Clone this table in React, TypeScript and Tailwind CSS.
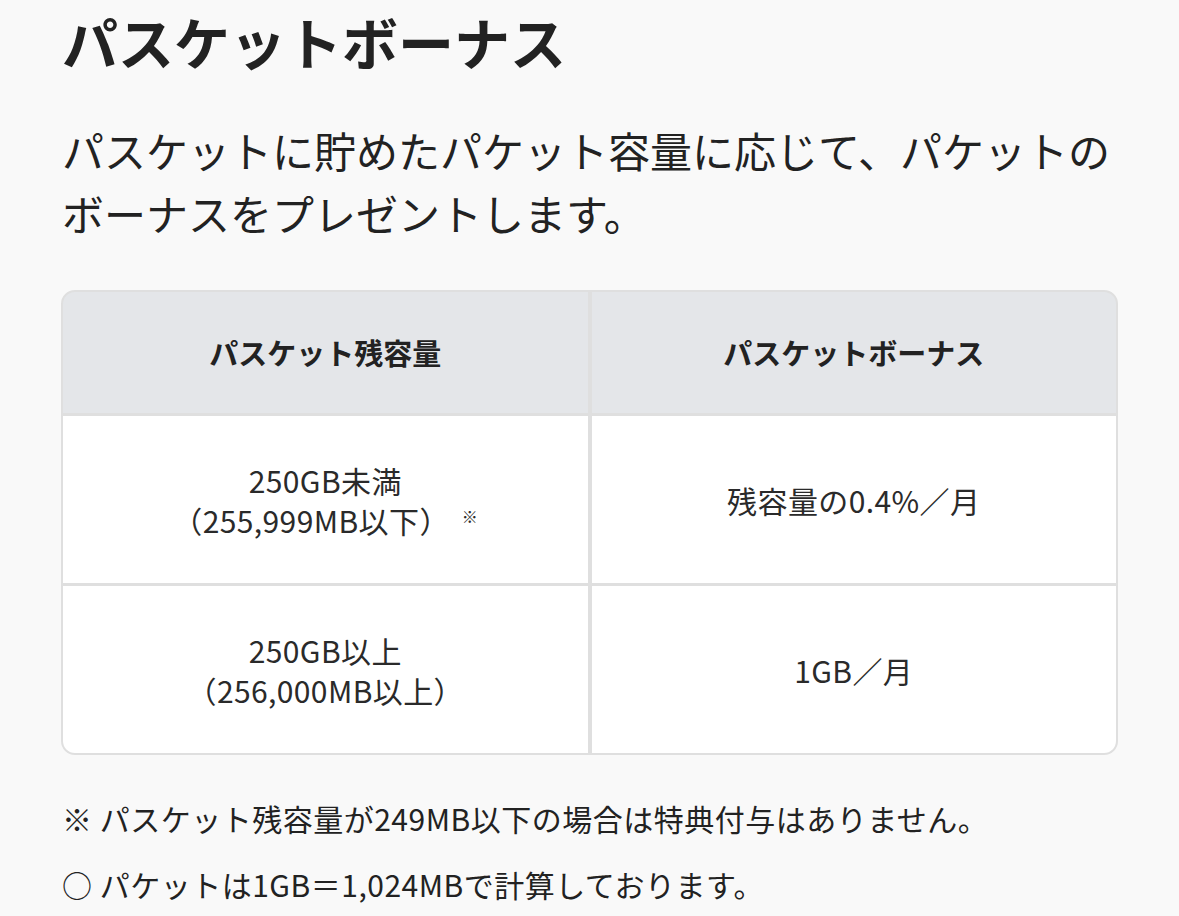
const font = '[font-family:"Noto_Sans_CJK_JP","Noto_Sans",sans-serif]'

interface Row {
  range: string[]
  note?: boolean
  bonus: string
}

const rows: Row[] = [
  { range: ['250GB未満', '（255,999MB以下）'], note: true, bonus: '残容量の0.4%／月' },
  { range: ['250GB以上', '（256,000MB以上）'], bonus: '1GB／月' },
]

function HeadCell({ children }: { children: React.ReactNode }) {
  return (
    <div className="h-[121px] flex items-center justify-center bg-[#e4e6e9] text-[29px] font-bold text-[#222]">
      {children}
    </div>
  )
}

function BodyCell({ children }: { children: React.ReactNode }) {
  return (
    <div className="h-[167px] flex flex-col items-center justify-center bg-white text-[30px] leading-[40px] tracking-[0.4px] text-[#2a2a2a]">
      {children}
    </div>
  )
}

export default function App() {
  return (
    <div className={`min-h-[916px] bg-[#f9f9f9] px-[61px] ${font} text-[#222]`}>
      <h1 className="text-[56px] leading-[81px] font-bold pl-px">パスケットボーナス</h1>

      <p className="mt-[37px] text-[42px] leading-[63px] pl-px">
        パスケットに貯めたパケット容量に応じて、パケットの
        <br />
        ボーナスをプレゼントします。
      </p>

      <div className="mt-[46px] grid grid-cols-2 gap-x-[4px] gap-y-[3px] bg-[#dfdfdf] border-2 border-[#dfdfdf] rounded-[14px] overflow-hidden">
        <HeadCell>パスケット残容量</HeadCell>
        <HeadCell>パスケットボーナス</HeadCell>
        {rows.map(r => (
          <>
            <BodyCell key={r.range[0]}>
              <span>{r.range[0]}</span>
              <span>
                {r.range[1]}
                {r.note && (
                  <span className="relative -top-[10px] ml-[12px] text-[16px] leading-none">※</span>
                )}
              </span>
            </BodyCell>
            <BodyCell key={r.bonus}>
              <span>{r.bonus}</span>
            </BodyCell>
          </>
        ))}
      </div>

      <div className="mt-[41px] text-[30px] leading-[45px] tracking-[0.5px] pl-px">
        <p>※ パスケット残容量が249MB以下の場合は特典付与はありません。</p>
        <p className="mt-[21px]">○ パケットは1GB＝1,024MBで計算しております。</p>
      </div>
    </div>
  )
}
